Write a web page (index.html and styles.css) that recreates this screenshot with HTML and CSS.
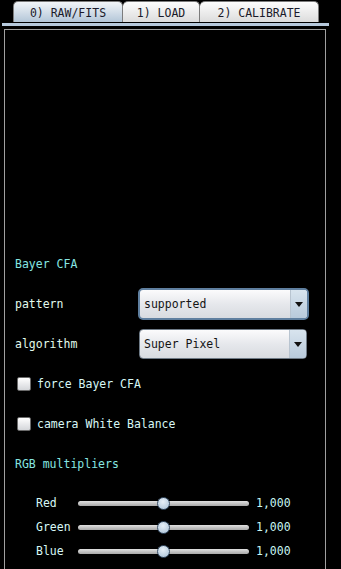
FILE: index.html
```html
<!DOCTYPE html>
<html>
<head>
<meta charset="utf-8">
<link rel="stylesheet" href="styles.css">
</head>
<body>
<div class="tabs">
  <div class="tab active">0) RAW/FITS</div>
  <div class="tab t2">1) LOAD</div>
  <div class="tab t3">2) CALIBRATE</div>
</div>
<div class="bar"></div>
<div class="panel">
  <div class="row head">Bayer CFA</div>
  <div class="row field">
    <span class="label">pattern</span>
    <div class="select focus"><span class="val">supported</span><span class="arrow"><i></i></span></div>
  </div>
  <div class="row field">
    <span class="label">algorithm</span>
    <div class="select"><span class="val">Super Pixel</span><span class="arrow"><i></i></span></div>
  </div>
  <div class="row check"><span class="box"></span><span class="clabel">force Bayer CFA</span></div>
  <div class="row check"><span class="box"></span><span class="clabel">camera White Balance</span></div>
  <div class="row head">RGB multipliers</div>
  <div class="sliders">
    <div class="srow"><span class="slabel">Red</span><span class="track"><span class="thumb"></span></span><span class="sval">1,000</span></div>
    <div class="srow"><span class="slabel">Green</span><span class="track"><span class="thumb"></span></span><span class="sval">1,000</span></div>
    <div class="srow"><span class="slabel">Blue</span><span class="track"><span class="thumb"></span></span><span class="sval">1,000</span></div>
  </div>
</div>
</body>
</html>
```

FILE: styles.css
```css
html, body {
  margin: 0;
  padding: 0;
  background: #000;
  height: 569px;
  overflow: hidden;
  font-family: "DejaVu Sans Mono", monospace;
  font-size: 11.5px;
}
.tabs {
  display: flex;
  padding: 1px 0 0 13px;
  height: 21px;
  box-sizing: content-box;
}
.tab {
  box-sizing: border-box;
  height: 21px;
  border: 1px solid #7c7c7c;
  border-bottom: none;
  border-radius: 5px 5px 0 0;
  background: linear-gradient(#fdfdfd, #dcdcdc);
  color: #1a1a2a;
  display: flex;
  align-items: center;
  justify-content: center;
  padding-top: 1px;
}
.tab.active {
  width: 110px;
  background: linear-gradient(#f2f5f8, #d6e0ea 45%, #b3c6d8);
}
.tab.t2 { width: 77px; border-left: none; }
.tab.t3 { width: 119px; border-left: none; }
.bar {
  margin: 1px 12px 0 2px;
  height: 3px;
  background: #b6c9dc;
}
.panel {
  margin: 3px 0 0 4px;
  width: 322px;
  height: 560px;
  box-sizing: border-box;
  border: 1px solid #a0a0a0;
  border-bottom: none;
  padding: 214px 0 0 10px;
  display: flex;
  flex-direction: column;
}
.row {
  height: 40px;
  display: flex;
  align-items: center;
}
.row.head:first-child { height: 40px; }
.head { color: #86e6e2; }
.label { color: #e2fbec; width: 124px; }
.select {
  box-sizing: border-box;
  width: 168px;
  height: 30px;
  border: 1px solid #6e7a86;
  border-radius: 4px;
  background: linear-gradient(#fbfbfc, #e6e8ec 50%, #d8dbe0);
  display: flex;
  align-items: stretch;
  overflow: hidden;
}
.select.focus {
  width: 171px;
  height: 32px;
  margin-left: -1px;
  border: 2px solid #5f7f9f;
  border-radius: 5px;
}
.val {
  flex: 1;
  color: #141414;
  display: flex;
  align-items: center;
  padding-left: 4px;
}
.arrow {
  width: 16px;
  border-left: 1px solid #b8c4d0;
  background: linear-gradient(#d8e4ee, #b8cadb);
  display: flex;
  align-items: center;
  justify-content: center;
}
.arrow i {
  width: 0;
  height: 0;
  border-left: 4px solid transparent;
  border-right: 4px solid transparent;
  border-top: 5px solid #111;
}
.check .box {
  box-sizing: border-box;
  width: 14px;
  height: 14px;
  margin-left: 2px;
  border: 1px solid #6a6a6a;
  border-radius: 2px;
  background: linear-gradient(#ffffff, #d4d6da);
}
.clabel { color: #d8f8f6; margin-left: 6px; }
.sliders {
  display: flex;
  flex-direction: column;
  padding-top: 7px;
}
.srow {
  height: 24px;
  display: flex;
  align-items: center;
  padding-left: 21px;
}
.slabel { color: #d8f8f6; width: 42px; }
.track {
  position: relative;
  width: 171px;
  height: 5px;
  border-radius: 3px;
  background: linear-gradient(#e0e0e0, #a8a8a8);
}
.thumb {
  position: absolute;
  left: 79px;
  top: -4px;
  box-sizing: border-box;
  width: 13px;
  height: 13px;
  border-radius: 50%;
  border: 1px solid #3a5068;
  background: radial-gradient(circle at 45% 35%, #e6eff7, #a8c0d6);
}
.sval { color: #c8f6f2; margin-left: 7px; }
```
